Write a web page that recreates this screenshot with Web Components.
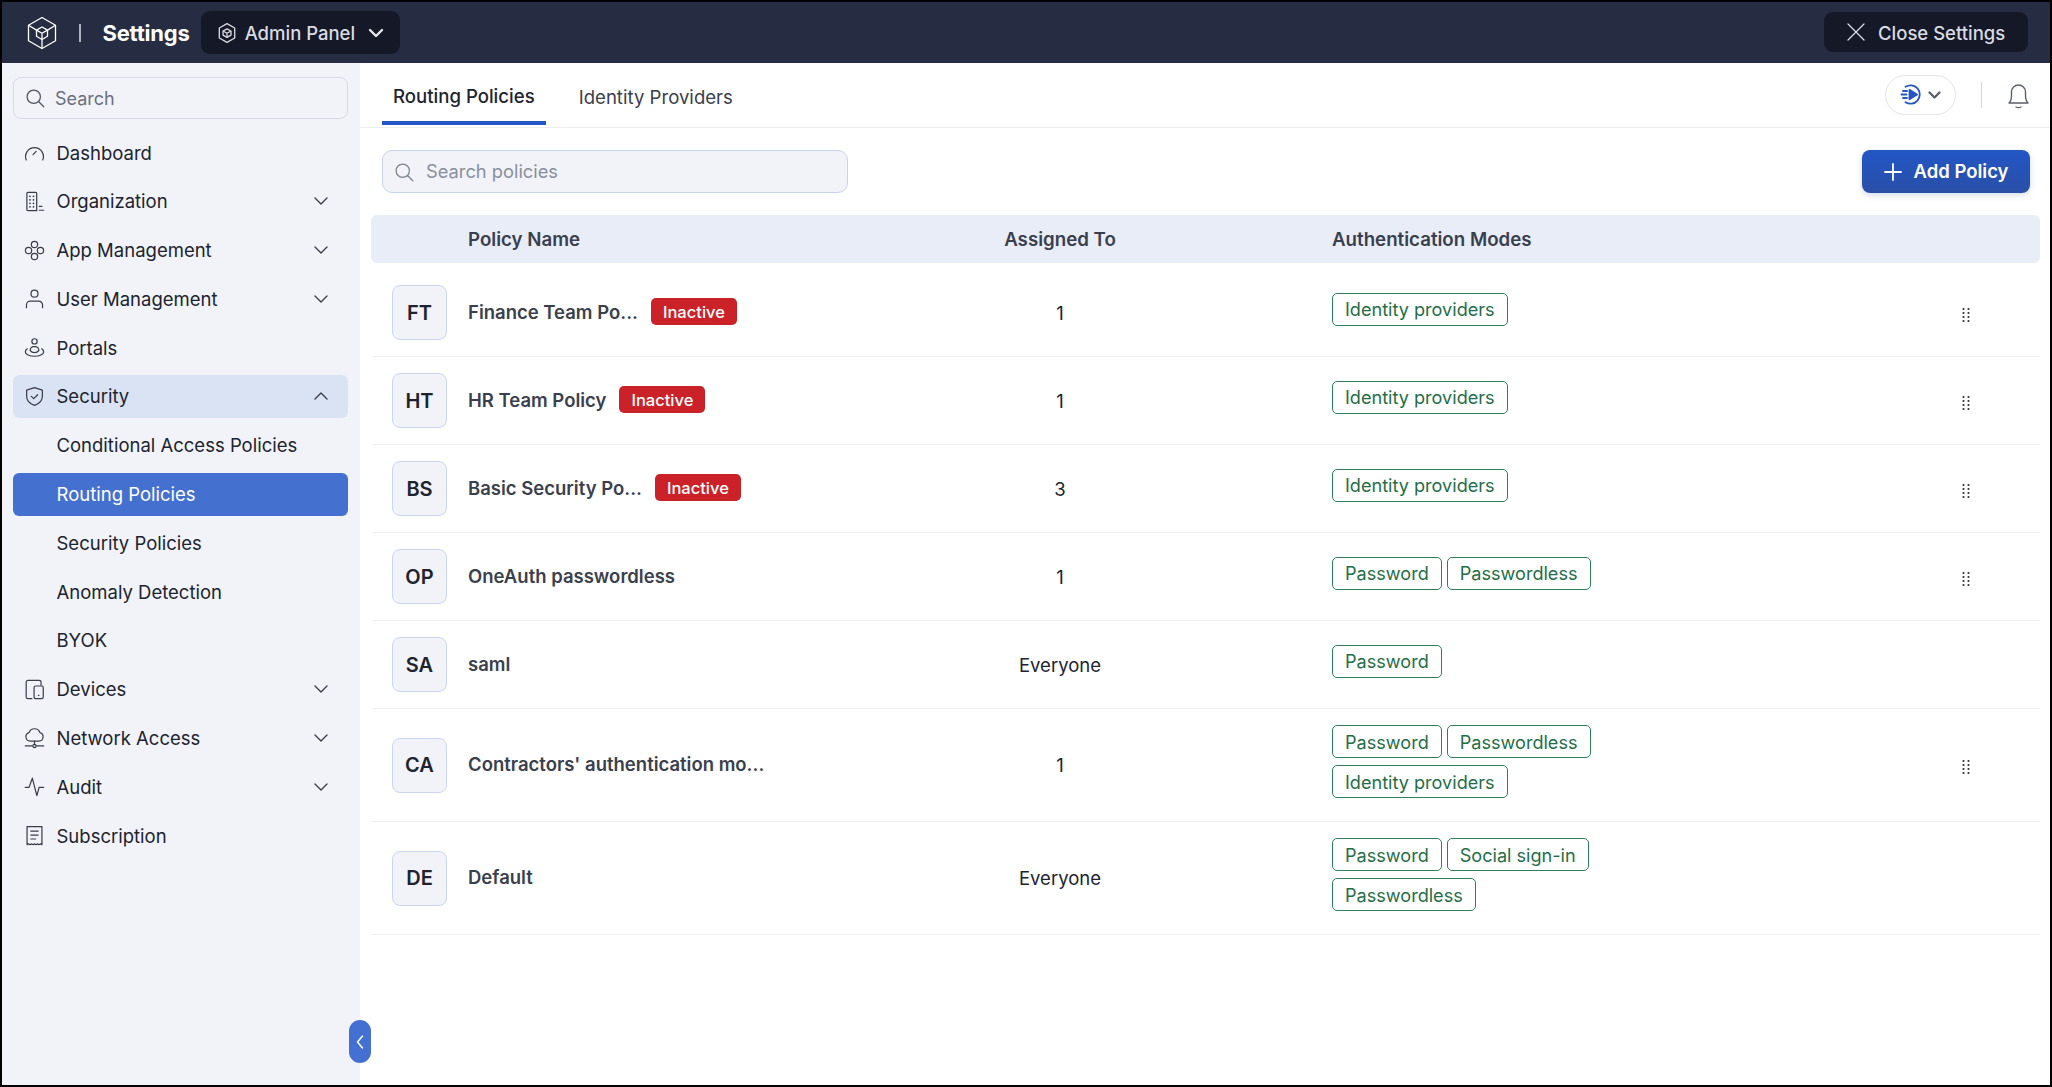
<!DOCTYPE html>
<html lang="en">
<head>
<meta charset="utf-8">
<title>Settings - Routing Policies</title>
<style>
  html, body { margin: 0; height: 100%; background: #000; }
  body { font-family: Inter, "Noto Sans", sans-serif; color: #20232f; }
</style>
</head>
<body>
<app-shell>
  <top-bar slot="top"></top-bar>
  <side-nav slot="side"></side-nav>
  <tab-bar slot="main"></tab-bar>
  <policy-toolbar slot="main"></policy-toolbar>
  <policy-table slot="main">
    <policy-row initials="FT" name="Finance Team Po..." status="Inactive" assigned="1" modes="Identity providers" menu></policy-row>
    <policy-row initials="HT" name="HR Team Policy" status="Inactive" assigned="1" modes="Identity providers" menu></policy-row>
    <policy-row initials="BS" name="Basic Security Po..." status="Inactive" assigned="3" modes="Identity providers" menu></policy-row>
    <policy-row initials="OP" name="OneAuth passwordless" assigned="1" modes="Password,Passwordless" menu></policy-row>
    <policy-row initials="SA" name="saml" assigned="Everyone" modes="Password"></policy-row>
    <policy-row initials="CA" name="Contractors' authentication mo..." assigned="1" modes="Password,Passwordless,Identity providers" menu></policy-row>
    <policy-row initials="DE" name="Default" assigned="Everyone" modes="Password,Social sign-in,Passwordless"></policy-row>
  </policy-table>
</app-shell>

<script>
// shared stroke icons for the side navigation (24x24 box)
const NAV_ICONS = {
  dashboard: '<path d="M2.600 20.500a10.200 10.200 0 1 1 18.800 0"/><path d="M10.400 14.400l3.400-3.600"/>',
  organization: '<path d="M14.500 22.500H4.500a1.200 1.200 0 0 1-1.200-1.200V2.700a1.200 1.200 0 0 1 1.200-1.200h8.800a1.200 1.200 0 0 1 1.200 1.200z"/><path d="M6.800 6h.1M10.800 6h.1M6.800 10h.1M10.800 10h.1M6.800 14h.1M10.800 14h.1M6.800 18h.1M10.800 18h.1" stroke-width="2"/><path d="M17.500 17.500h3M17.500 22h5"/>',
  apps: '<circle cx="12" cy="5.200" r="3.600"/><circle cx="12" cy="18.800" r="3.600"/><circle cx="5.200" cy="12" r="3.600"/><circle cx="18.800" cy="12" r="3.600"/>',
  user: '<circle cx="12" cy="6.500" r="4"/><path d="M2.800 22.500v-3A4.500 4.500 0 0 1 7.300 15h9.400a4.500 4.500 0 0 1 4.500 4.500v3"/>',
  portals: '<circle cx="12" cy="5" r="3"/><path d="M7.200 15.500v-.8a3.600 3.600 0 0 1 3.600-3.600h2.400a3.600 3.600 0 0 1 3.600 3.600v.8"/><path d="M3.800 13.500C2.200 14.500 1.500 15.700 1.500 17c0 2.800 4.700 5 10.500 5s10.500-2.200 10.500-5c0-1.300-.7-2.500-2.300-3.500"/><path d="M7.200 15.500c1 1.500 2.800 2.300 4.800 2.300s3.800-.8 4.800-2.300"/>',
  security: '<path d="M12 1.800l9 3v7c0 5-3.600 8.600-9 10.400-5.400-1.800-9-5.400-9-10.400v-7z"/><path d="M8.400 11.800l2.700 2.700 4.500-4.500"/>',
  devices: '<path d="M9 22.500H4.500a2 2 0 0 1-2-2V3.500a2 2 0 0 1 2-2h13a2 2 0 0 1 2 2V7"/><rect x="11.500" y="8" width="10.500" height="14.500" rx="1.800"/><path d="M16.400 18.800h.6"/>',
  network: '<path d="M7 15a5 5 0 0 1-1.200-9.800 6.600 6.600 0 0 1 12.400 0A5 5 0 0 1 17 15z"/><path d="M12 15v4M1.500 20.500h8M14.500 20.500h8"/><circle cx="12" cy="20.500" r="1.800"/>',
  audit: '<path d="M1.500 13h4.300L9.500 2.500l5.200 20 2.600-9.500h5.200"/>',
  subscription: '<path d="M3.500 22.500V1.800h17v20.700l-1.700-.9-1.700.9-1.700-.9-1.700.9-1.700-.9-1.700.9-1.700-.9-1.700.9-1.700-.9z"/><path d="M7.800 7h8.400M7.800 11.500h8.400M7.800 16h5.500"/>'
};

const SEARCH_ICON = `<svg viewBox="0 0 24 24" fill="none" stroke="currentColor" stroke-width="1.500" stroke-linecap="round"><circle cx="10.500" cy="10.500" r="8"/><path d="M16.500 16.500l6 6"/></svg>`;

class AppShell extends HTMLElement {
  constructor() {
    super();
    this.attachShadow({ mode: 'open' });
    this.shadowRoot.innerHTML = `
      <style>
        :host {
          display: grid;
          grid-template-columns: 358px 1fr;
          grid-template-rows: 61px 1fr;
          height: 100vh;
          box-sizing: border-box;
          border: 2px solid #000;
          background: #fff;
          position: relative;
        }
        .top { grid-column: 1 / 3; }
        .main { min-width: 0; display: flex; flex-direction: column; }
        .handle {
          position: absolute;
          left: 347px;
          top: 1018px;
          width: 22px;
          height: 43px;
          border-radius: 11px;
          background: #4470d2;
          display: flex;
          align-items: center;
          justify-content: center;
        }
        .handle svg { width: 10px; height: 16px; }
      </style>
      <div class="top"><slot name="top"></slot></div>
      <div><slot name="side"></slot></div>
      <div class="main"><slot name="main"></slot></div>
      <div class="handle">
        <svg viewBox="0 0 10 16" fill="none" stroke="#fff" stroke-width="1.500" stroke-linecap="round" stroke-linejoin="round"><path d="M7.500 2L2.500 8l5 6"/></svg>
      </div>
    `;
  }
}

class TopBar extends HTMLElement {
  constructor() {
    super();
    this.attachShadow({ mode: 'open' });
    this.shadowRoot.innerHTML = `
      <style>
        :host {
          display: flex;
          align-items: center;
          height: 61px;
          background: #262c41;
          color: #fff;
          padding: 0 22px 0 25px;
        }
        .logo { width: 30px; height: 34px; margin-right: 22px; }
        .sep { width: 1.500px; height: 18px; background: #aeb2bf; margin-right: 22px; }
        .title { font-size: 22px; font-weight: 700; margin-right: 11px; letter-spacing: -0.2px; }
        .btn {
          display: flex;
          align-items: center;
          background: #141827;
          color: #d9dbe2;
          border-radius: 9px;
          font-size: 18.500px;
          font-weight: 500;
          white-space: nowrap;
        }
        .panel { height: 43px; width: 199px; box-sizing: border-box; padding: 0 16px 0 16px; }
        .panel .hex { width: 20px; height: 22px; margin-right: 8px; }
        .panel .chev { width: 16px; height: 10px; margin-left: auto; }
        .close { margin-left: auto; height: 40px; width: 204px; box-sizing: border-box; padding: 0 0 0 23px; position: relative; top: -1px; }
        .close svg { width: 18px; height: 18px; margin-right: 13px; flex: none; }
        .close span { position: relative; top: 1px; }
      </style>
      <svg class="logo" viewBox="0 0 30 34" fill="none" stroke="#fff" stroke-width="1.300" stroke-linejoin="round">
        <path d="M15 1.500L28.500 9.200V24.800L15 32.500 1.500 24.800V9.200z"/>
        <path d="M15 11l5.500 3.100v6.200L15 23.500l-5.500-3.200v-6.200z"/>
        <path d="M9.500 14.100l5.500 3.200 5.500-3.200M15 17.300v6.200M1.500 9.200l8 4.900M28.500 9.200l-8 4.900M15 23.500v9"/>
      </svg>
      <span class="sep"></span>
      <span class="title">Settings</span>
      <div class="btn panel">
        <svg class="hex" viewBox="0 0 18 20" fill="none" stroke="#d9dbe2" stroke-width="1.200" stroke-linejoin="round">
          <path d="M9 1.500l7 4v9l-7 4-7-4v-9z"/>
          <path d="M9 6.200l3.600 2v3.800L9 14l-3.600-2V8.200z"/>
          <path d="M5.400 8.200L9 10.200l3.600-2M9 10.200V14"/>
        </svg>
        <span>Admin Panel</span>
        <svg class="chev" viewBox="0 0 16 10" fill="none" stroke="#e6e8ee" stroke-width="2.400" stroke-linecap="round" stroke-linejoin="round"><path d="M2 2l6 6 6-6"/></svg>
      </div>
      <div class="btn close">
        <svg viewBox="0 0 18 18" fill="none" stroke="#d9dbe2" stroke-width="1.300" stroke-linecap="round"><path d="M1 1l16 16M17 1L1 17"/></svg>
        <span>Close Settings</span>
      </div>
    `;
  }
}

class NavItem extends HTMLElement {
  constructor() {
    super();
    this.attachShadow({ mode: 'open' });
  }

  connectedCallback() {
    const icon = NAV_ICONS[this.getAttribute('icon')];
    const chevron = this.getAttribute('chevron');
    this.shadowRoot.innerHTML = `
      <style>
        :host {
          display: flex;
          align-items: center;
          height: 43px;
          box-sizing: border-box;
          padding: 0 20px 0 11px;
          border-radius: 6px;
          font-size: 18.500px;
          color: #20232f;
        }
        :host([open]) { background: #dae3f4; }
        :host([active]) { background: #4470d0; color: #fff; }
        .icon { width: 21px; height: 21px; margin-right: 11.500px; flex: none; color: #3a3e4b; }
        .spacer { width: 21px; margin-right: 11.500px; flex: none; }
        .chev { width: 14px; height: 8px; margin-left: auto; color: #3a3e4b; }
      </style>
      ${icon
        ? `<svg class="icon" viewBox="0 0 24 24" fill="none" stroke="currentColor" stroke-width="1.400" stroke-linecap="round" stroke-linejoin="round">${icon}</svg>`
        : '<span class="spacer"></span>'}
      <span><slot></slot></span>
      ${chevron
        ? `<svg class="chev" viewBox="0 0 14 8" fill="none" stroke="currentColor" stroke-width="1.400" stroke-linecap="round" stroke-linejoin="round"><path d="${chevron === 'up' ? 'M1 7l6-6 6 6' : 'M1 1l6 6 6-6'}"/></svg>`
        : ''}
    `;
  }
}

class SideNav extends HTMLElement {
  constructor() {
    super();
    this.attachShadow({ mode: 'open' });
    this.shadowRoot.innerHTML = `
      <style>
        :host {
          display: block;
          height: 100%;
          box-sizing: border-box;
          background: #f1f3f9;
          padding: 14px 12px 0 11px;
        }
        .search {
          display: flex;
          align-items: center;
          height: 42px;
          box-sizing: border-box;
          border: 1.500px solid #d8dbe4;
          border-radius: 8px;
          padding: 0 11px;
          color: #6b7080;
          font-size: 18px;
          margin-bottom: 12px;
        }
        .search svg { width: 20px; height: 20px; margin-right: 10px; color: #50545f; }
        nav { display: flex; flex-direction: column; gap: 5.800px; }
      </style>
      <div class="search">${SEARCH_ICON}<span>Search</span></div>
      <nav>
        <nav-item icon="dashboard">Dashboard</nav-item>
        <nav-item icon="organization" chevron="down">Organization</nav-item>
        <nav-item icon="apps" chevron="down">App Management</nav-item>
        <nav-item icon="user" chevron="down">User Management</nav-item>
        <nav-item icon="portals">Portals</nav-item>
        <nav-item icon="security" chevron="up" open>Security</nav-item>
        <nav-item>Conditional Access Policies</nav-item>
        <nav-item active>Routing Policies</nav-item>
        <nav-item>Security Policies</nav-item>
        <nav-item>Anomaly Detection</nav-item>
        <nav-item>BYOK</nav-item>
        <nav-item icon="devices" chevron="down">Devices</nav-item>
        <nav-item icon="network" chevron="down">Network Access</nav-item>
        <nav-item icon="audit" chevron="down">Audit</nav-item>
        <nav-item icon="subscription">Subscription</nav-item>
      </nav>
    `;
  }
}

class TabBar extends HTMLElement {
  constructor() {
    super();
    this.attachShadow({ mode: 'open' });
    this.shadowRoot.innerHTML = `
      <style>
        :host {
          display: flex;
          align-items: stretch;
          height: 65px;
          box-sizing: border-box;
          border-bottom: 1.500px solid #eceef2;
          padding: 0 20px 0 22px;
          font-size: 18.600px;
          color: #3a3e4b;
        }
        .tab { display: flex; align-items: center; padding: 7px 11px 0; height: 60px; margin-right: 22px; box-sizing: border-box; }
        .tab.on { color: #20232f; font-weight: 500; border-bottom: 4px solid #2456c4; height: 62px; }
        .right { margin-left: auto; display: flex; align-items: center; }
        .pill {
          display: flex;
          align-items: center;
          justify-content: center;
          gap: 5px;
          width: 71px;
          height: 40px;
          box-sizing: border-box;
          border: 1.500px solid #e2e4ea;
          border-radius: 20px;
          margin-top: -1px;
        }
        .pill .play { width: 23px; height: 23px; }
        .pill .chev { width: 13px; height: 8px; }
        .divider { width: 1.500px; height: 26px; background: #d4d6dc; margin: 0 25px; }
        .bell { width: 23px; height: 27px; }
      </style>
      <div class="tab on">Routing Policies</div>
      <div class="tab">Identity Providers</div>
      <div class="right">
        <div class="pill">
          <svg class="play" viewBox="0 0 23 23" fill="none" stroke="#2456c4" stroke-width="1.800" stroke-linecap="round">
            <path d="M5.500 3.800a9.200 9.200 0 1 1 0 15.400"/>
            <path d="M3 8h4M1.500 11.500h5M3 15h4"/>
            <path d="M9.500 6.800l7.500 4.700-7.500 4.700z" fill="#2456c4" stroke-linejoin="round"/>
          </svg>
          <svg class="chev" viewBox="0 0 13 8" fill="none" stroke="#555a66" stroke-width="2.200" stroke-linecap="round" stroke-linejoin="round"><path d="M1.500 1.500l5 5 5-5"/></svg>
        </div>
        <span class="divider"></span>
        <svg class="bell" viewBox="0 0 22 27" fill="none" stroke="#5b5f6b" stroke-width="1.400" stroke-linecap="round" stroke-linejoin="round">
          <path d="M1.500 21c2-1.800 2.500-3.500 2.500-7.500V10a7 7 0 0 1 14 0v3.500c0 4 .5 5.700 2.500 7.500z"/>
          <path d="M8.500 25c1.500.8 3.500.8 5 0"/>
        </svg>
      </div>
    `;
  }
}

class PolicyToolbar extends HTMLElement {
  constructor() {
    super();
    this.attachShadow({ mode: 'open' });
    this.shadowRoot.innerHTML = `
      <style>
        :host {
          display: flex;
          justify-content: space-between;
          align-items: center;
          padding: 22px 20px 22px 22px;
        }
        .search {
          display: flex;
          align-items: center;
          width: 466px;
          height: 43px;
          box-sizing: border-box;
          border: 1.500px solid #c8d4ec;
          border-radius: 10px;
          background: #f1f3f9;
          color: #8a8f9c;
          font-size: 18.300px;
          padding: 0 11px;
        }
        .search svg { width: 20px; height: 20px; margin-right: 12px; color: #7d818c; }
        .search span { position: relative; top: -1px; }
        .add {
          display: flex;
          align-items: center;
          justify-content: center;
          width: 168px;
          height: 43px;
          border-radius: 8px;
          background: linear-gradient(#2256c6, #2a4fa6);
          color: #fff;
          font-size: 18.500px;
          font-weight: 600;
          box-shadow: 0 2px 6px rgba(36, 70, 150, 0.2);
        }
        .add span { position: relative; top: -1px; }
        .add svg { width: 18px; height: 18px; margin-right: 12px; }
      </style>
      <div class="search">${SEARCH_ICON}<span>Search policies</span></div>
      <div class="add">
        <svg viewBox="0 0 18 18" fill="none" stroke="#fff" stroke-width="1.800" stroke-linecap="round"><path d="M9 1v16M1 9h16"/></svg>
        <span>Add Policy</span>
      </div>
    `;
  }
}

class PolicyTable extends HTMLElement {
  constructor() {
    super();
    this.attachShadow({ mode: 'open' });
    this.shadowRoot.innerHTML = `
      <style>
        :host {
          display: block;
          margin: 0 10px 0 11px;
          --policy-cols: 97px 340px 504px 1fr 148px;
        }
        .head {
          display: grid;
          grid-template-columns: var(--policy-cols);
          align-items: center;
          height: 48px;
          margin-bottom: 6px;
          background: #e8edf8;
          border-radius: 6px;
          font-size: 18.700px;
          font-weight: 600;
          color: #3a3f4e;
        }
        .center { text-align: center; }
        .auth { padding-left: 20px; }
      </style>
      <div class="head">
        <span></span>
        <span>Policy Name</span>
        <span class="center">Assigned To</span>
        <span class="auth">Authentication Modes</span>
        <span></span>
      </div>
      <slot></slot>
    `;
  }
}

class AuthTag extends HTMLElement {
  constructor() {
    super();
    this.attachShadow({ mode: 'open' });
    this.shadowRoot.innerHTML = `
      <style>
        :host {
          display: inline-flex;
          align-items: center;
          height: 33px;
          box-sizing: border-box;
          padding: 0 12px;
          border: 1.500px solid #2f8058;
          border-radius: 5px;
          color: #1f6e48;
          font-size: 18.100px;
        }
      </style>
      <slot></slot>
    `;
  }
}

class PolicyRow extends HTMLElement {
  constructor() {
    super();
    this.attachShadow({ mode: 'open' });
  }

  connectedCallback() {
    const status = this.getAttribute('status');
    const modes = this.getAttribute('modes').split(',');
    this.shadowRoot.innerHTML = `
      <style>
        :host {
          display: grid;
          grid-template-columns: var(--policy-cols);
          align-items: center;
          min-height: 88px;
          box-sizing: border-box;
          border-bottom: 1.500px solid #eff0f3;
          color: #20232f;
        }
        .avatar {
          display: flex;
          align-items: center;
          justify-content: center;
          width: 55px;
          height: 55px;
          margin-left: 21px;
          box-sizing: border-box;
          border: 1.500px solid #cbd6ee;
          border-radius: 8px;
          background: #f1f3f9;
          font-size: 20px;
          font-weight: 600;
        }
        .name {
          display: flex;
          align-items: center;
          gap: 13px;
          font-size: 18.500px;
          font-weight: 600;
          color: #3a3f4e;
          white-space: nowrap;
          position: relative;
          top: -1px;
        }
        .badge {
          display: inline-flex;
          align-items: center;
          height: 27px;
          padding: 0 12px;
          border-radius: 5px;
          background: #cb2229;
          color: #fff;
          font-size: 16.500px;
          font-weight: 500;
        }
        .assigned { text-align: center; font-size: 18.500px; }
        .modes {
          display: flex;
          flex-wrap: wrap;
          gap: 7px 5px;
          margin-left: 20px;
          padding: 16px 0 23px;
          max-width: 270px;
        }
        .grip { display: block; width: 8px; height: 16px; margin: 4px 0 0 70px; }
      </style>
      <div class="avatar">${this.getAttribute('initials')}</div>
      <div class="name">
        <span>${this.getAttribute('name')}</span>
        ${status ? `<span class="badge">${status}</span>` : ''}
      </div>
      <div class="assigned">${this.getAttribute('assigned')}</div>
      <div class="modes">${modes.map((m) => `<auth-tag>${m}</auth-tag>`).join('')}</div>
      <div>
        ${this.hasAttribute('menu')
          ? `<svg class="grip" viewBox="0 0 8 16" fill="#2c2f3a"><circle cx="1.500" cy="2" r="1.100"/><circle cx="6.500" cy="2" r="1.100"/><circle cx="1.500" cy="6" r="1.100"/><circle cx="6.500" cy="6" r="1.100"/><circle cx="1.500" cy="10" r="1.100"/><circle cx="6.500" cy="10" r="1.100"/><circle cx="1.500" cy="14" r="1.100"/><circle cx="6.500" cy="14" r="1.100"/></svg>`
          : ''}
      </div>
    `;
  }
}

window.customElements.define('app-shell', AppShell);
window.customElements.define('top-bar', TopBar);
window.customElements.define('nav-item', NavItem);
window.customElements.define('side-nav', SideNav);
window.customElements.define('tab-bar', TabBar);
window.customElements.define('policy-toolbar', PolicyToolbar);
window.customElements.define('policy-table', PolicyTable);
window.customElements.define('auth-tag', AuthTag);
window.customElements.define('policy-row', PolicyRow);
</script>
</body>
</html>
